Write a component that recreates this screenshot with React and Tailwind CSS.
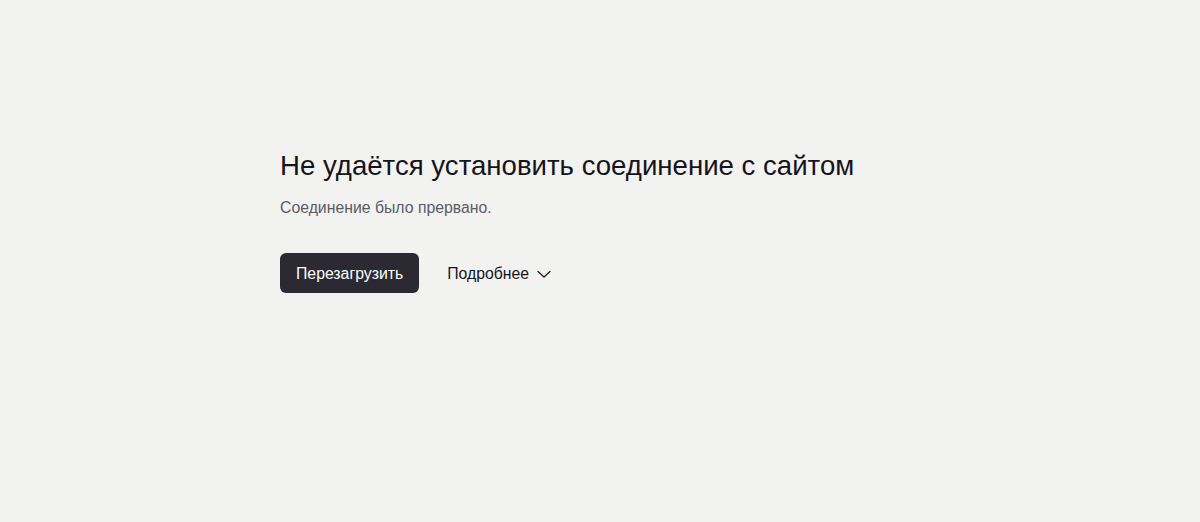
import React from 'react';

const Chevron = () => (
  <svg width="14" height="14" viewBox="0 0 14 14" fill="none" className="ml-2">
    <path d="M1 4.5 7 10l6-5.5" stroke="currentColor" strokeWidth="1.2" strokeLinecap="round" strokeLinejoin="round" />
  </svg>
);

export default function App() {
  return (
    <div className="min-h-screen w-full bg-[#f2f2f1] font-['Liberation_Sans',Arial,sans-serif]">
      <div className="pl-[280px] pt-[148px]">
        <h1 className="text-[27.6px] leading-[36px] text-[#15141a]">Не удаётся установить соединение с сайтом</h1>
        <p className="mt-[14px] text-[15.8px] leading-[20px] text-[#5b5b66]">Соединение было прервано.</p>
        <div className="mt-[35px] flex items-center gap-[12px]">
          <button className="h-10 rounded-[6px] bg-[#2b2a33] px-4 pt-px text-[15.8px] text-white">Перезагрузить</button>
          <button className="flex h-10 items-center px-4 pt-px text-[15.8px] text-[#15141a]">
            Подробнее
            <Chevron />
          </button>
        </div>
      </div>
    </div>
  );
}
